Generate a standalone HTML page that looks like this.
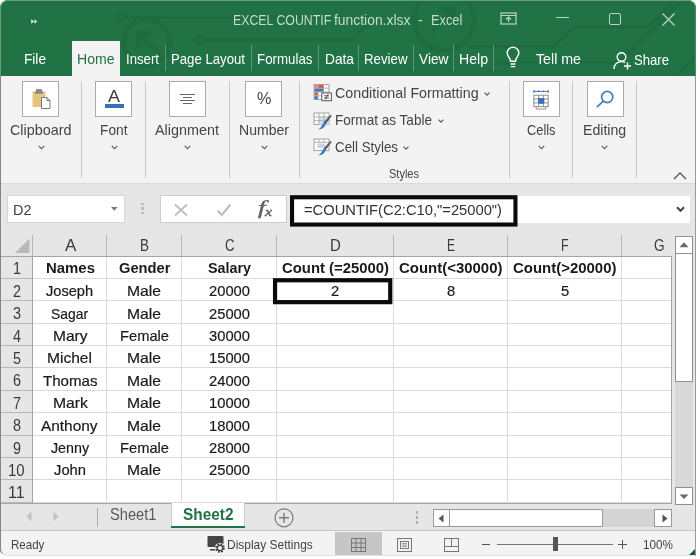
<!DOCTYPE html>
<html><head><meta charset="utf-8"><title>Excel</title>
<style>
html,body{margin:0;padding:0;background:#fff;}
body{width:700px;height:559px;position:relative;overflow:hidden;font-family:"Liberation Sans",sans-serif;}
#w{position:absolute;left:0;top:0;width:696px;height:556px;overflow:hidden;border-radius:8px 8px 0 7px;}
#w div,#w span,#w svg{position:absolute;box-sizing:border-box;}
.t{white-space:pre;transform-origin:0 50%;}
#tx{position:absolute;left:0;top:0;width:696px;height:556px;will-change:transform;}
#tx span{position:absolute;}
</style></head><body><div id="w">
<div style="left:0px;top:0px;width:696px;height:556px;background:#f3f3f3;"></div>
<div style="left:0px;top:0px;width:696px;height:76px;background:#217346;"></div>
<svg style="left:0;top:0" width="696" height="76" viewBox="0 0 696 76" fill="none" stroke="#1e6c40" stroke-width="3.5" stroke-linecap="round">
<circle cx="121" cy="17" r="4"/><path d="M126 17H330"/>
<circle cx="147" cy="42" r="23" stroke-width="5"/><path d="M138 33L158 53M138 46V33H151" stroke-width="5"/>
<circle cx="201" cy="40" r="4"/><path d="M206 40H352L366 26"/>
<circle cx="444" cy="20" r="30" stroke-width="5"/><path d="M432 31L453 10M440 10H453V23" stroke-width="5"/>
<path d="M470 47H553L575 27H648L673 2" stroke="#1e6c40" stroke-width="4"/>
<path d="M500 63H619L680 2" stroke="#1e6c40" stroke-width="4"/>
<path d="M674 78L697 55" stroke="#1e6c40" stroke-width="4"/>
</svg>
<svg style="left:30.800px;top:18.600px" width="7" height="5" viewBox="0 0 7 5"><path d="M0.2 0.2L3 2.5L0.2 4.800zM3.400 0.2L6.200 2.5L3.400 4.800z" fill="#e6f2ea"/></svg>
<svg style="left:500px;top:11px" width="18" height="16" viewBox="0 0 18 16" fill="none" stroke="#b9d6c5" stroke-width="1.2"><rect x="1" y="2" width="15" height="11"/><path d="M1 4.5H16M8.5 11V6.5M6 8.5L8.5 6L11 8.5"/></svg>
<div style="left:555.5px;top:17px;width:13px;height:1.3px;background:#b9d6c5;"></div>
<div style="left:609px;top:13px;width:12px;height:12px;border:1.3px solid #b9d6c5;border-radius:2px;"></div>
<svg style="left:662px;top:13px" width="13" height="13" viewBox="0 0 13 13" stroke="#b9d6c5" stroke-width="1.3"><path d="M0.5 0.5L12.5 12.5M12.5 0.5L0.5 12.5"/></svg>
<div style="left:72px;top:41px;width:47.5px;height:36px;background:#f3f3f3;"></div>
<div style="left:164.5px;top:45px;width:1px;height:26px;background:#5a9875;"></div>
<div style="left:250.5px;top:45px;width:1px;height:26px;background:#5a9875;"></div>
<div style="left:318.0px;top:45px;width:1px;height:26px;background:#5a9875;"></div>
<div style="left:358.0px;top:45px;width:1px;height:26px;background:#5a9875;"></div>
<div style="left:412.5px;top:45px;width:1px;height:26px;background:#5a9875;"></div>
<div style="left:452.5px;top:45px;width:1px;height:26px;background:#5a9875;"></div>
<div style="left:493.0px;top:45px;width:1px;height:26px;background:#5a9875;"></div>
<svg style="left:506px;top:46px" width="14" height="24" viewBox="0 0 14 24" fill="none" stroke="#fff" stroke-width="1.4"><path d="M7 1.2C3.6 1.2 1.2 3.8 1.2 7c0 2.4 1.6 3.9 2.6 5.6.5.9.6 1.7.6 2.6h5.2c0-.9.1-1.7.6-2.6 1-1.7 2.6-3.2 2.6-5.6 0-3.2-2.4-5.800-5.800-5.800z"/><path d="M4.500 18h5M4.800 20.600h4.400"/></svg>
<svg style="left:613px;top:50.5px" width="20" height="20" viewBox="0 0 20 20" fill="none" stroke="#fff" stroke-width="1.4"><circle cx="8.500" cy="6" r="4.300"/><path d="M1 18c0-4.500 3.200-7.400 7.500-7.400 1.500 0 2.800.3 3.900.9"/><path d="M14.500 11.500v7M11 15h7"/></svg>
<div style="left:22px;top:81px;width:37px;height:36px;background:#fff;border:1px solid #ababab;"></div>
<svg style="left:37.5px;top:145.200px" width="7" height="5" viewBox="0 0 7 5" fill="none" stroke="#5a5a5a" stroke-width="1.1"><path d="M0.700 0.800L3.500 3.600L6.300 0.800"/></svg>
<div style="left:95px;top:81px;width:37px;height:36px;background:#fff;border:1px solid #ababab;"></div>
<svg style="left:110.5px;top:145.200px" width="7" height="5" viewBox="0 0 7 5" fill="none" stroke="#5a5a5a" stroke-width="1.1"><path d="M0.700 0.800L3.500 3.600L6.300 0.800"/></svg>
<div style="left:169px;top:81px;width:37px;height:36px;background:#fff;border:1px solid #ababab;"></div>
<svg style="left:184.0px;top:145.200px" width="7" height="5" viewBox="0 0 7 5" fill="none" stroke="#5a5a5a" stroke-width="1.1"><path d="M0.700 0.800L3.500 3.600L6.300 0.800"/></svg>
<div style="left:245px;top:81px;width:37px;height:36px;background:#fff;border:1px solid #ababab;"></div>
<svg style="left:260.5px;top:145.200px" width="7" height="5" viewBox="0 0 7 5" fill="none" stroke="#5a5a5a" stroke-width="1.1"><path d="M0.700 0.800L3.500 3.600L6.300 0.800"/></svg>
<div style="left:523px;top:81px;width:37px;height:36px;background:#fff;border:1px solid #ababab;"></div>
<svg style="left:538.0px;top:145.200px" width="7" height="5" viewBox="0 0 7 5" fill="none" stroke="#5a5a5a" stroke-width="1.1"><path d="M0.700 0.800L3.500 3.600L6.300 0.800"/></svg>
<div style="left:586.5px;top:81px;width:37px;height:36px;background:#fff;border:1px solid #ababab;"></div>
<svg style="left:601.0px;top:145.200px" width="7" height="5" viewBox="0 0 7 5" fill="none" stroke="#5a5a5a" stroke-width="1.1"><path d="M0.700 0.800L3.500 3.600L6.300 0.800"/></svg>
<div style="left:81.0px;top:81px;width:1px;height:97px;background:#c8c8c8;"></div>
<div style="left:144.5px;top:81px;width:1px;height:97px;background:#c8c8c8;"></div>
<div style="left:229.0px;top:81px;width:1px;height:97px;background:#c8c8c8;"></div>
<div style="left:298.5px;top:81px;width:1px;height:97px;background:#c8c8c8;"></div>
<div style="left:509.0px;top:81px;width:1px;height:97px;background:#c8c8c8;"></div>
<div style="left:572.0px;top:81px;width:1px;height:97px;background:#c8c8c8;"></div>
<div style="left:635.5px;top:81px;width:1px;height:97px;background:#c8c8c8;"></div>
<svg style="left:31px;top:88px" width="22" height="22" viewBox="0 0 22 22">
<rect x="1.500" y="3.500" width="13" height="15.500" rx="1" fill="#e8c282"/>
<rect x="5" y="1" width="6" height="4" rx="1" fill="#8a8a8a"/><rect x="4" y="3.200" width="8" height="2.600" fill="#8a8a8a"/>
<path d="M10.500 9.500h5.500l3 3v8h-8.500z" fill="#fff" stroke="#777" stroke-width="1"/><path d="M16 9.500v3h3" fill="none" stroke="#777" stroke-width="1"/></svg>
<div style="left:104.5px;top:104px;width:19px;height:4px;background:#3b6db5;"></div>
<div style="left:180px;top:93.5px;width:15px;height:1px;background:#666;"></div>
<div style="left:183px;top:96.7px;width:9px;height:1px;background:#666;"></div>
<div style="left:180px;top:99.9px;width:15px;height:1px;background:#666;"></div>
<div style="left:183px;top:103.1px;width:9px;height:1px;background:#666;"></div>
<svg style="left:313px;top:83.5px" width="20" height="19" viewBox="0 0 20 19"><rect x="1" y="0.5" width="15" height="15" fill="#fff" stroke="#9a9a9a" stroke-width="0.9"/><path d="M1 4.2H16M1 8H16M1 11.800H16M5 0.5V15.5M10.500 0.5V15.5" stroke="#a8a8a8" stroke-width="0.9" fill="none"/><rect x="5.300" y="0.9" width="5" height="3" fill="#c8604a"/><rect x="1.400" y="0.9" width="3.400" height="3" fill="#d98a78"/><rect x="1.400" y="4.600" width="8.800" height="3" fill="#4a76b8"/><rect x="1.400" y="8.400" width="3.400" height="3" fill="#c8604a"/><rect x="1.400" y="12.200" width="3.400" height="3" fill="#4a76b8"/><rect x="8.800" y="9" width="9.600" height="7.700" fill="#fff" stroke="#555" stroke-width="1"/><path d="M11 11.800h5.200M11 14h5.200M15 10.300L12.300 15.500" stroke="#444" fill="none" stroke-width="0.9"/></svg>
<svg style="left:313px;top:112px" width="20" height="19" viewBox="0 0 20 19"><rect x="1" y="1" width="15" height="11.600" fill="#fff" stroke="#9a9a9a" stroke-width="0.9"/><rect x="6" y="5" width="10" height="7.600" fill="#d5e0ee"/><path d="M1 4.800H16M1 8.700H16M6 1V12.600M11 1V12.600" stroke="#a8a8a8" stroke-width="0.9" fill="none"/><path d="M18.800 3.800L12.600 12.200L10.600 10.500L17.400 3z" fill="#5a5a5a"/><path d="M5 17.200c2.200-0.300 3.500-2.600 5.200-6.200c0.300-0.600 2.800 1 2.400 1.800c-1.500 3.200-4 4.800-7.600 4.400z" fill="#3b78c6"/></svg>
<svg style="left:313px;top:138px" width="20" height="19" viewBox="0 0 20 19"><rect x="1" y="1" width="15" height="11.600" fill="#fff" stroke="#9a9a9a" stroke-width="0.9"/><rect x="4.500" y="5.500" width="8" height="4.500" fill="#c5d5ea"/><path d="M1 4.300H16M6 1V4.300M11 1V4.300" stroke="#a8a8a8" stroke-width="0.9" fill="none"/><path d="M18.800 3.800L12.600 12.200L10.600 10.500L17.400 3z" fill="#5a5a5a"/><path d="M5 17.200c2.200-0.300 3.500-2.600 5.200-6.200c0.300-0.600 2.800 1 2.400 1.800c-1.500 3.200-4 4.800-7.600 4.400z" fill="#3b78c6"/></svg>
<svg style="left:484px;top:91.5px" width="6" height="4" viewBox="0 0 6 4" fill="none" stroke="#5a5a5a" stroke-width="1.100"><path d="M0.500 0.600L3 3.200L5.500 0.600"/></svg>
<svg style="left:437.5px;top:118.5px" width="6" height="4" viewBox="0 0 6 4" fill="none" stroke="#5a5a5a" stroke-width="1.100"><path d="M0.500 0.600L3 3.200L5.500 0.600"/></svg>
<svg style="left:403px;top:145.5px" width="6" height="4" viewBox="0 0 6 4" fill="none" stroke="#5a5a5a" stroke-width="1.100"><path d="M0.500 0.600L3 3.200L5.500 0.600"/></svg>
<svg style="left:531px;top:88.500px" width="20" height="21" viewBox="0 0 20 22" fill="none">
<path d="M2.500 2.500H17.500M2.500 0.800V4.200M17.500 0.800V4.200M7.500 1.500V3.500M12.500 1.500V3.500" stroke="#3b6db5" stroke-width="1"/>
<rect x="2.500" y="6.500" width="15" height="12" fill="#fff" stroke="#8a8a8a"/><path d="M2.500 10.500H17.500M2.500 14.500H17.500M7.500 6.500V18.500M12.500 6.500V18.500" stroke="#8a8a8a"/>
<rect x="7" y="9.500" width="6.500" height="6" fill="#3b6db5"/><path d="M5 18.500v2.500h10v-2.500" stroke="#8a8a8a"/></svg>
<svg style="left:594px;top:88px" width="22" height="22" viewBox="0 0 22 22" fill="none" stroke="#4a7ebb" stroke-width="1.700"><circle cx="13.200" cy="9" r="5.600"/><path d="M9.300 13.200L3.300 18.600" stroke-linecap="round"/></svg>
<svg style="left:673px;top:171.500px" width="14" height="8" viewBox="0 0 14 8" fill="none" stroke="#555" stroke-width="1.300"><path d="M1 7L7 1L13 7"/></svg>
<div style="left:0px;top:183px;width:696px;height:50px;background:#e6e6e6;"></div>
<div style="left:0px;top:183px;width:696px;height:1px;background:#dadada;"></div>
<div style="left:6.5px;top:195px;width:118.5px;height:27.5px;background:#fff;border:1px solid #d6d6d6;"></div>
<svg style="left:110.500px;top:207.200px" width="7" height="4" viewBox="0 0 7 4"><path d="M0 0H6.600L3.300 3.700z" fill="#777"/></svg>
<div style="left:141.3px;top:202.5px;width:2.5px;height:2.5px;background:#bdbdbd;"></div>
<div style="left:141.3px;top:207px;width:2.5px;height:2.5px;background:#bdbdbd;"></div>
<div style="left:141.3px;top:211.5px;width:2.5px;height:2.5px;background:#bdbdbd;"></div>
<div style="left:159.5px;top:195px;width:127.5px;height:27.5px;background:#fff;border:1px solid #cdcdcd;"></div>
<svg style="left:174px;top:202.500px" width="14" height="14" viewBox="0 0 14 14" stroke="#bcbcbc" stroke-width="1.700"><path d="M1 1.500L13 12.500M13 1.500L1 12.500"/></svg>
<svg style="left:215.500px;top:202.500px" width="16" height="14" viewBox="0 0 16 14" fill="none" stroke="#bcbcbc" stroke-width="2.100"><path d="M1.500 7.500L5.800 12L14.500 1.500"/></svg>
<div style="left:290px;top:195.5px;width:400px;height:27px;background:#fff;"></div>
<svg style="left:288px;top:193px" width="232" height="36"><rect x="4.05" y="4.25" width="223.4" height="27.3" fill="#fff" stroke="#0a0a0a" stroke-width="4.1"/></svg>
<svg style="left:675.500px;top:205.500px" width="9" height="7" viewBox="0 0 9 7" fill="none" stroke="#444" stroke-width="2"><path d="M1 1.200L4.500 4.800L8 1.200"/></svg>
<div style="left:0px;top:233px;width:672px;height:271px;background:#fff;"></div>
<div style="left:0px;top:233px;width:672px;height:23.5px;background:#e6e6e6;"></div>
<div style="left:0px;top:233px;width:32.5px;height:271px;background:#e6e6e6;"></div>
<div style="left:32.5px;top:255.5px;width:639px;height:1px;background:#dbdbdb;"></div>
<div style="left:0px;top:255.5px;width:32.5px;height:1px;background:#a5a5a5;"></div>
<div style="left:32.5px;top:277.89px;width:639px;height:1px;background:#dbdbdb;"></div>
<div style="left:0px;top:277.89px;width:32.5px;height:1px;background:#b8b8b8;"></div>
<div style="left:32.5px;top:300.28px;width:639px;height:1px;background:#dbdbdb;"></div>
<div style="left:0px;top:300.28px;width:32.5px;height:1px;background:#b8b8b8;"></div>
<div style="left:32.5px;top:322.67px;width:639px;height:1px;background:#dbdbdb;"></div>
<div style="left:0px;top:322.67px;width:32.5px;height:1px;background:#b8b8b8;"></div>
<div style="left:32.5px;top:345.06px;width:639px;height:1px;background:#dbdbdb;"></div>
<div style="left:0px;top:345.06px;width:32.5px;height:1px;background:#b8b8b8;"></div>
<div style="left:32.5px;top:367.45px;width:639px;height:1px;background:#dbdbdb;"></div>
<div style="left:0px;top:367.45px;width:32.5px;height:1px;background:#b8b8b8;"></div>
<div style="left:32.5px;top:389.84000000000003px;width:639px;height:1px;background:#dbdbdb;"></div>
<div style="left:0px;top:389.84000000000003px;width:32.5px;height:1px;background:#b8b8b8;"></div>
<div style="left:32.5px;top:412.23px;width:639px;height:1px;background:#dbdbdb;"></div>
<div style="left:0px;top:412.23px;width:32.5px;height:1px;background:#b8b8b8;"></div>
<div style="left:32.5px;top:434.62px;width:639px;height:1px;background:#dbdbdb;"></div>
<div style="left:0px;top:434.62px;width:32.5px;height:1px;background:#b8b8b8;"></div>
<div style="left:32.5px;top:457.01px;width:639px;height:1px;background:#dbdbdb;"></div>
<div style="left:0px;top:457.01px;width:32.5px;height:1px;background:#b8b8b8;"></div>
<div style="left:32.5px;top:479.4px;width:639px;height:1px;background:#dbdbdb;"></div>
<div style="left:0px;top:479.4px;width:32.5px;height:1px;background:#b8b8b8;"></div>
<div style="left:32.5px;top:501.79px;width:639px;height:1px;background:#dbdbdb;"></div>
<div style="left:0px;top:501.79px;width:32.5px;height:1px;background:#b8b8b8;"></div>
<div style="left:32.0px;top:256px;width:1px;height:247px;background:#dbdbdb;"></div>
<div style="left:32.0px;top:235px;width:1px;height:21.5px;background:#b8b8b8;"></div>
<div style="left:106.0px;top:256px;width:1px;height:247px;background:#dbdbdb;"></div>
<div style="left:106.0px;top:235px;width:1px;height:21.5px;background:#b8b8b8;"></div>
<div style="left:181.0px;top:256px;width:1px;height:247px;background:#dbdbdb;"></div>
<div style="left:181.0px;top:235px;width:1px;height:21.5px;background:#b8b8b8;"></div>
<div style="left:275.5px;top:256px;width:1px;height:247px;background:#dbdbdb;"></div>
<div style="left:275.5px;top:235px;width:1px;height:21.5px;background:#b8b8b8;"></div>
<div style="left:393.0px;top:256px;width:1px;height:247px;background:#dbdbdb;"></div>
<div style="left:393.0px;top:235px;width:1px;height:21.5px;background:#b8b8b8;"></div>
<div style="left:507.0px;top:256px;width:1px;height:247px;background:#dbdbdb;"></div>
<div style="left:507.0px;top:235px;width:1px;height:21.5px;background:#b8b8b8;"></div>
<div style="left:621.0px;top:256px;width:1px;height:247px;background:#dbdbdb;"></div>
<div style="left:621.0px;top:235px;width:1px;height:21.5px;background:#b8b8b8;"></div>
<div style="left:32px;top:256px;width:640px;height:1px;background:#a5a5a5;"></div>
<div style="left:32px;top:256px;width:1px;height:247px;background:#a5a5a5;"></div>
<svg style="left:14px;top:238px" width="16" height="16" viewBox="0 0 16 16"><path d="M15.5 0.5V15H1z" fill="#b9b9b9"/></svg>
<svg style="left:270px;top:275px" width="125" height="33"><rect x="5.05" y="5.25" width="115.2" height="21.9" fill="none" stroke="#0a0a0a" stroke-width="4.2"/></svg>
<div style="left:672px;top:233px;width:24px;height:272px;background:#e6e6e6;"></div>
<div style="left:671px;top:256px;width:1px;height:248px;background:#a6a6a6;"></div>
<div style="left:675px;top:253px;width:17.5px;height:235px;background:#d9d9d9;"></div>
<div style="left:675px;top:252px;width:17.5px;height:130px;background:#fff;border:1px solid #8f8f8f;"></div>
<div style="left:675px;top:236px;width:17.5px;height:17.5px;background:#fff;border:1px solid #8f8f8f;"></div>
<svg style="left:679px;top:242px" width="10" height="6" viewBox="0 0 10 6"><path d="M5 0.3L9.500 5.200H0.500z" fill="#6a6a6a"/></svg>
<div style="left:675px;top:487px;width:17.5px;height:17.5px;background:#fff;border:1px solid #8f8f8f;"></div>
<svg style="left:679px;top:494.300px" width="10" height="6" viewBox="0 0 10 6"><path d="M0.500 0.500H9.500L5 5z" fill="#6a6a6a"/></svg>
<div style="left:0px;top:504px;width:672px;height:27px;background:#e6e6e6;"></div>
<div style="left:672px;top:505px;width:24px;height:26px;background:#e6e6e6;"></div>
<div style="left:0px;top:503px;width:672px;height:1px;background:#a6a6a6;"></div>
<svg style="left:26px;top:511px" width="6" height="11" viewBox="0 0 6 11"><path d="M5.500 0.500V10.500L0.500 5.500z" fill="#c2c2c2"/></svg>
<svg style="left:53px;top:511px" width="6" height="11" viewBox="0 0 6 11"><path d="M0.500 0.500V10.500L5.500 5.500z" fill="#c2c2c2"/></svg>
<div style="left:97px;top:507.5px;width:1px;height:19px;background:#ababab;"></div>
<div style="left:171px;top:503px;width:73.5px;height:24px;background:#fff;border:1px solid #c8c8c8;border-top:none;border-bottom:none;"></div>
<div style="left:171px;top:526px;width:73.5px;height:2px;background:#217346;"></div>
<svg style="left:273px;top:507px" width="22" height="22" viewBox="0 0 22 22" fill="none" stroke="#7a7a7a" stroke-width="1.200"><circle cx="11" cy="10.800" r="9"/><path d="M6 10.800H16M11 5.800V15.800" stroke-width="1.400"/></svg>
<div style="left:415.5px;top:511px;width:2.5px;height:2.5px;background:#b0b0b0;"></div>
<div style="left:415.5px;top:516px;width:2.5px;height:2.5px;background:#b0b0b0;"></div>
<div style="left:415.5px;top:521px;width:2.5px;height:2.5px;background:#b0b0b0;"></div>
<div style="left:432.5px;top:509px;width:17px;height:17.5px;background:#fff;border:1px solid #9a9a9a;"></div>
<svg style="left:438px;top:513.500px" width="6" height="9" viewBox="0 0 6 9"><path d="M5.500 0.500V8.500L0.500 4.500z" fill="#555"/></svg>
<div style="left:449px;top:509px;width:154px;height:17.5px;background:#fff;border:1px solid #9a9a9a;"></div>
<div style="left:603px;top:509px;width:52px;height:17.5px;background:#d4d4d4;"></div>
<div style="left:654px;top:509px;width:17.5px;height:17.5px;background:#fff;border:1px solid #9a9a9a;"></div>
<svg style="left:661.500px;top:513.500px" width="6" height="9" viewBox="0 0 6 9"><path d="M0.500 0.500V8.500L5.500 4.500z" fill="#555"/></svg>
<div style="left:0px;top:530.5px;width:696px;height:25.5px;background:#f3f3f3;"></div>
<div style="left:0px;top:530px;width:696px;height:1px;background:#c6c6c6;"></div>
<svg style="left:207px;top:535px" width="19" height="19" viewBox="0 0 19 19"><rect x="0.500" y="1" width="16" height="11" rx="1" fill="#444"/><rect x="3" y="14" width="7" height="1.500" fill="#444"/>
<circle cx="13" cy="13" r="5.300" fill="#f3f3f3"/><circle cx="13" cy="13" r="3.700" fill="none" stroke="#444" stroke-width="2.200" stroke-dasharray="1.700 1.200"/><circle cx="13" cy="13" r="2.700" fill="none" stroke="#444" stroke-width="1.300"/></svg>
<div style="left:335px;top:531.5px;width:46.5px;height:24px;background:#c6c6c6;"></div>
<svg style="left:351px;top:537.500px" width="15" height="15" viewBox="0 0 15 15" fill="none" stroke="#777" stroke-width="1"><rect x="0.500" y="0.500" width="14" height="13"/><path d="M0.500 5H14.500M0.500 9.500H14.500M5 0.500V13.500M10 0.500V13.500"/></svg>
<svg style="left:396.500px;top:537.500px" width="15" height="14" viewBox="0 0 15 14" fill="none" stroke="#777" stroke-width="1"><rect x="0.500" y="0.500" width="14" height="13"/><rect x="3.500" y="3.500" width="8" height="7"/><path d="M5 5.500H10M5 7H10M5 8.500H10" stroke-width="0.700"/></svg>
<svg style="left:444px;top:537.500px" width="15" height="14" viewBox="0 0 15 14" fill="none" stroke="#777" stroke-width="1"><rect x="0.500" y="0.500" width="14" height="13"/><path d="M0.500 8.500H14.500M7.500 0.500V8.500"/></svg>
<div style="left:482px;top:544px;width:8px;height:1.2px;background:#555;"></div>
<div style="left:496.5px;top:544px;width:116px;height:1px;background:#777;"></div>
<div style="left:553px;top:537px;width:5px;height:14px;background:#555;"></div>
<div style="left:618px;top:544px;width:9px;height:1.2px;background:#555;"></div>
<div style="left:622px;top:540px;width:1.2px;height:9px;background:#555;"></div>
<div style="left:0px;top:0px;width:696px;height:76px;border:1px solid #6a9c80;border-bottom:none;border-radius:8px 8px 0 0;border-right-color:#4d8a68;"></div>
<div style="left:0px;top:76px;width:1px;height:480px;background:#858585;"></div>
<div style="left:695px;top:76px;width:1px;height:480px;background:#9a9a9a;"></div>
<div style="left:0px;top:76px;width:696px;height:480px;border:1px solid #858585;border-top:none;border-radius:0 0 0 7px;border-right-color:#9a9a9a;border-bottom-color:#e2e2e2;"></div>
<svg style="left:689px;top:549px" width="6" height="6" viewBox="0 0 6 6"><path d="M6 0V6H0z" fill="#1d5e3a"/></svg>
</div>
<div id="tx">
<span class="t" style="left:232.6px;top:11.60px;font-size:14px;line-height:16.80px;color:#c3dccd;transform:scaleX(0.8807);">EXCEL COUNTIF</span>
<span class="t" style="left:334.2px;top:11.60px;font-size:14px;line-height:16.80px;color:#c3dccd;transform:scaleX(0.9916);">function.xlsx</span>
<span class="t" style="left:418.4px;top:11.60px;font-size:14px;line-height:16.80px;color:#c3dccd;transform:scaleX(1.0274);">-</span>
<span class="t" style="left:430.7px;top:11.60px;font-size:14px;line-height:16.80px;color:#c3dccd;transform:scaleX(0.9143);">Excel</span>
<span class="t" style="left:24px;top:50.50px;font-size:14.5px;line-height:17.40px;color:#ffffff;transform:scaleX(0.9412);">File</span>
<span class="t" style="left:77px;top:50.50px;font-size:14.5px;line-height:17.40px;color:#217346;transform:scaleX(0.9693);">Home</span>
<span class="t" style="left:126px;top:50.50px;font-size:14.5px;line-height:17.40px;color:#ffffff;transform:scaleX(0.9100);">Insert</span>
<span class="t" style="left:171px;top:50.50px;font-size:14.5px;line-height:17.40px;color:#ffffff;transform:scaleX(0.9087);">Page Layout</span>
<span class="t" style="left:257px;top:50.50px;font-size:14.5px;line-height:17.40px;color:#ffffff;transform:scaleX(0.9183);">Formulas</span>
<span class="t" style="left:324.5px;top:50.50px;font-size:14.5px;line-height:17.40px;color:#ffffff;transform:scaleX(0.9465);">Data</span>
<span class="t" style="left:364px;top:50.50px;font-size:14.5px;line-height:17.40px;color:#ffffff;transform:scaleX(0.9149);">Review</span>
<span class="t" style="left:418.5px;top:50.50px;font-size:14.5px;line-height:17.40px;color:#ffffff;transform:scaleX(0.9464);">View</span>
<span class="t" style="left:458.5px;top:50.50px;font-size:14.5px;line-height:17.40px;color:#ffffff;transform:scaleX(0.9722);">Help</span>
<span class="t" style="left:536px;top:50.50px;font-size:14.5px;line-height:17.40px;color:#ffffff;transform:scaleX(0.9796);">Tell me</span>
<span class="t" style="left:634px;top:52.30px;font-size:14.5px;line-height:17.40px;color:#ffffff;transform:scaleX(0.9043);">Share</span>
<span class="t" style="left:10.0px;top:122.30px;font-size:14.5px;line-height:17.40px;color:#444444;transform:scaleX(0.9907);">Clipboard</span>
<span class="t" style="left:99.5px;top:122.30px;font-size:14.5px;line-height:17.40px;color:#444444;transform:scaleX(0.9478);">Font</span>
<span class="t" style="left:155.0px;top:122.30px;font-size:14.5px;line-height:17.40px;color:#444444;transform:scaleX(0.9925);">Alignment</span>
<span class="t" style="left:239.0px;top:122.30px;font-size:14.5px;line-height:17.40px;color:#444444;transform:scaleX(0.9694);">Number</span>
<span class="t" style="left:527.0px;top:122.30px;font-size:14.5px;line-height:17.40px;color:#444444;transform:scaleX(0.8841);">Cells</span>
<span class="t" style="left:582.5px;top:122.30px;font-size:14.5px;line-height:17.40px;color:#444444;transform:scaleX(0.9742);">Editing</span>
<span class="t" style="left:108.3px;top:87.30px;font-size:16.5px;line-height:19.80px;color:#3a3a3a;transform:scaleX(1.0894);">A</span>
<span class="t" style="left:256.8px;top:88.92px;font-size:16.8px;line-height:20.16px;color:#444;transform:scaleX(0.9650);">%</span>
<span class="t" style="left:335px;top:85.30px;font-size:14.5px;line-height:17.40px;color:#444444;transform:scaleX(0.9843);">Conditional Formatting</span>
<span class="t" style="left:335px;top:112.30px;font-size:14.5px;line-height:17.40px;color:#444444;transform:scaleX(0.9354);">Format as Table</span>
<span class="t" style="left:335px;top:139.30px;font-size:14.5px;line-height:17.40px;color:#444444;transform:scaleX(0.9197);">Cell Styles</span>
<span class="t" style="left:389px;top:167.30px;font-size:12px;line-height:14.40px;color:#444444;transform:scaleX(0.9178);">Styles</span>
<span class="t" style="left:13px;top:202.00px;font-size:14.5px;line-height:17.40px;color:#444444;transform:scaleX(0.9975);">D2</span>
<span class="t" style="left:257.5px;top:197.10px;font-size:19px;line-height:22.80px;color:#5f5f5f;font-style:italic;font-family:'Liberation Serif',serif;-webkit-text-stroke:0.4px #5f5f5f;transform:scaleX(1.4201);">f</span>
<span class="t" style="left:264.5px;top:203.70px;font-size:13px;line-height:15.60px;color:#5f5f5f;font-style:italic;font-family:'Liberation Serif',serif;-webkit-text-stroke:0.4px #5f5f5f;transform:scaleX(1.2108);">x</span>
<span class="t" style="left:304px;top:201.80px;font-size:14.5px;line-height:17.40px;color:#333;transform:scaleX(1.0162);">=COUNTIF(C2:C10,&quot;=25000&quot;)</span>
<span class="t" style="left:64.5px;top:236.02px;font-size:16.3px;line-height:19.56px;color:#3a3a3a;transform:scaleX(1.0483);">A</span>
<span class="t" style="left:140.2px;top:236.02px;font-size:16.3px;line-height:19.56px;color:#3a3a3a;transform:scaleX(0.8276);">B</span>
<span class="t" style="left:224.5px;top:236.02px;font-size:16.3px;line-height:19.56px;color:#3a3a3a;transform:scaleX(0.8159);">C</span>
<span class="t" style="left:329.90000000000003px;top:236.02px;font-size:16.3px;line-height:19.56px;color:#3a3a3a;transform:scaleX(0.9179);">D</span>
<span class="t" style="left:447.0px;top:236.02px;font-size:16.3px;line-height:19.56px;color:#3a3a3a;transform:scaleX(0.7356);">E</span>
<span class="t" style="left:561.2px;top:236.02px;font-size:16.3px;line-height:19.56px;color:#3a3a3a;transform:scaleX(0.7636);">F</span>
<span class="t" style="left:653.7px;top:236.02px;font-size:16.3px;line-height:19.56px;color:#3a3a3a;transform:scaleX(0.8365);">G</span>
<span class="t" style="left:12.5px;top:259.39px;font-size:16px;line-height:19.20px;color:#3a3a3a;transform:scaleX(0.8982);">1</span>
<span class="t" style="left:12.5px;top:281.78px;font-size:16px;line-height:19.20px;color:#3a3a3a;transform:scaleX(0.8982);">2</span>
<span class="t" style="left:12.5px;top:304.18px;font-size:16px;line-height:19.20px;color:#3a3a3a;transform:scaleX(0.8982);">3</span>
<span class="t" style="left:12.5px;top:326.56px;font-size:16px;line-height:19.20px;color:#3a3a3a;transform:scaleX(0.8982);">4</span>
<span class="t" style="left:12.5px;top:348.95px;font-size:16px;line-height:19.20px;color:#3a3a3a;transform:scaleX(0.8982);">5</span>
<span class="t" style="left:12.5px;top:371.34px;font-size:16px;line-height:19.20px;color:#3a3a3a;transform:scaleX(0.8982);">6</span>
<span class="t" style="left:12.5px;top:393.73px;font-size:16px;line-height:19.20px;color:#3a3a3a;transform:scaleX(0.8982);">7</span>
<span class="t" style="left:12.5px;top:416.12px;font-size:16px;line-height:19.20px;color:#3a3a3a;transform:scaleX(0.8982);">8</span>
<span class="t" style="left:12.5px;top:438.51px;font-size:16px;line-height:19.20px;color:#3a3a3a;transform:scaleX(0.8982);">9</span>
<span class="t" style="left:8.2px;top:460.91px;font-size:16px;line-height:19.20px;color:#3a3a3a;transform:scaleX(0.9327);">10</span>
<span class="t" style="left:8.2px;top:483.30px;font-size:16px;line-height:19.20px;color:#3a3a3a;transform:scaleX(0.9994);">11</span>
<span class="t" style="left:45.5px;top:260.32px;font-size:14.3px;line-height:17.16px;color:#1a1a1a;font-weight:700;transform:scaleX(1.0446);">Names</span>
<span class="t" style="left:118.5px;top:260.32px;font-size:14.3px;line-height:17.16px;color:#1a1a1a;font-weight:700;transform:scaleX(1.0287);">Gender</span>
<span class="t" style="left:207.5px;top:260.32px;font-size:14.3px;line-height:17.16px;color:#1a1a1a;font-weight:700;transform:scaleX(1.0015);">Salary</span>
<span class="t" style="left:46px;top:282.29px;font-size:15px;line-height:18.00px;color:#1a1a1a;-webkit-text-stroke:0.2px #1a1a1a;transform:scaleX(0.9716);">Joseph</span>
<span class="t" style="left:127px;top:282.29px;font-size:15px;line-height:18.00px;color:#1a1a1a;-webkit-text-stroke:0.2px #1a1a1a;transform:scaleX(1.0457);">Male</span>
<span class="t" style="left:209px;top:282.29px;font-size:15px;line-height:18.00px;color:#1a1a1a;-webkit-text-stroke:0.2px #1a1a1a;transform:scaleX(0.9828);">20000</span>
<span class="t" style="left:51px;top:304.68px;font-size:15px;line-height:18.00px;color:#1a1a1a;-webkit-text-stroke:0.2px #1a1a1a;transform:scaleX(0.9243);">Sagar</span>
<span class="t" style="left:127px;top:304.68px;font-size:15px;line-height:18.00px;color:#1a1a1a;-webkit-text-stroke:0.2px #1a1a1a;transform:scaleX(1.0457);">Male</span>
<span class="t" style="left:209px;top:304.68px;font-size:15px;line-height:18.00px;color:#1a1a1a;-webkit-text-stroke:0.2px #1a1a1a;transform:scaleX(0.9828);">25000</span>
<span class="t" style="left:52.5px;top:327.07px;font-size:15px;line-height:18.00px;color:#1a1a1a;-webkit-text-stroke:0.2px #1a1a1a;transform:scaleX(1.0347);">Mary</span>
<span class="t" style="left:119.5px;top:327.07px;font-size:15px;line-height:18.00px;color:#1a1a1a;-webkit-text-stroke:0.2px #1a1a1a;transform:scaleX(0.9794);">Female</span>
<span class="t" style="left:209px;top:327.07px;font-size:15px;line-height:18.00px;color:#1a1a1a;-webkit-text-stroke:0.2px #1a1a1a;transform:scaleX(0.9828);">30000</span>
<span class="t" style="left:47px;top:349.46px;font-size:15px;line-height:18.00px;color:#1a1a1a;-webkit-text-stroke:0.2px #1a1a1a;transform:scaleX(1.0378);">Michel</span>
<span class="t" style="left:127px;top:349.46px;font-size:15px;line-height:18.00px;color:#1a1a1a;-webkit-text-stroke:0.2px #1a1a1a;transform:scaleX(1.0457);">Male</span>
<span class="t" style="left:209px;top:349.46px;font-size:15px;line-height:18.00px;color:#1a1a1a;-webkit-text-stroke:0.2px #1a1a1a;transform:scaleX(0.9828);">15000</span>
<span class="t" style="left:43px;top:371.85px;font-size:15px;line-height:18.00px;color:#1a1a1a;-webkit-text-stroke:0.2px #1a1a1a;transform:scaleX(1.0058);">Thomas</span>
<span class="t" style="left:127px;top:371.85px;font-size:15px;line-height:18.00px;color:#1a1a1a;-webkit-text-stroke:0.2px #1a1a1a;transform:scaleX(1.0457);">Male</span>
<span class="t" style="left:209px;top:371.85px;font-size:15px;line-height:18.00px;color:#1a1a1a;-webkit-text-stroke:0.2px #1a1a1a;transform:scaleX(0.9828);">24000</span>
<span class="t" style="left:52.5px;top:394.24px;font-size:15px;line-height:18.00px;color:#1a1a1a;-webkit-text-stroke:0.2px #1a1a1a;transform:scaleX(1.0497);">Mark</span>
<span class="t" style="left:127px;top:394.24px;font-size:15px;line-height:18.00px;color:#1a1a1a;-webkit-text-stroke:0.2px #1a1a1a;transform:scaleX(1.0457);">Male</span>
<span class="t" style="left:209px;top:394.24px;font-size:15px;line-height:18.00px;color:#1a1a1a;-webkit-text-stroke:0.2px #1a1a1a;transform:scaleX(0.9828);">10000</span>
<span class="t" style="left:41px;top:416.63px;font-size:15px;line-height:18.00px;color:#1a1a1a;-webkit-text-stroke:0.2px #1a1a1a;transform:scaleX(1.0264);">Anthony</span>
<span class="t" style="left:127px;top:416.63px;font-size:15px;line-height:18.00px;color:#1a1a1a;-webkit-text-stroke:0.2px #1a1a1a;transform:scaleX(1.0457);">Male</span>
<span class="t" style="left:209px;top:416.63px;font-size:15px;line-height:18.00px;color:#1a1a1a;-webkit-text-stroke:0.2px #1a1a1a;transform:scaleX(0.9828);">18000</span>
<span class="t" style="left:50.5px;top:439.02px;font-size:15px;line-height:18.00px;color:#1a1a1a;-webkit-text-stroke:0.2px #1a1a1a;transform:scaleX(0.9493);">Jenny</span>
<span class="t" style="left:119.5px;top:439.02px;font-size:15px;line-height:18.00px;color:#1a1a1a;-webkit-text-stroke:0.2px #1a1a1a;transform:scaleX(0.9794);">Female</span>
<span class="t" style="left:209px;top:439.02px;font-size:15px;line-height:18.00px;color:#1a1a1a;-webkit-text-stroke:0.2px #1a1a1a;transform:scaleX(0.9828);">28000</span>
<span class="t" style="left:54px;top:461.41px;font-size:15px;line-height:18.00px;color:#1a1a1a;-webkit-text-stroke:0.2px #1a1a1a;transform:scaleX(0.9837);">John</span>
<span class="t" style="left:127px;top:461.41px;font-size:15px;line-height:18.00px;color:#1a1a1a;-webkit-text-stroke:0.2px #1a1a1a;transform:scaleX(1.0457);">Male</span>
<span class="t" style="left:209px;top:461.41px;font-size:15px;line-height:18.00px;color:#1a1a1a;-webkit-text-stroke:0.2px #1a1a1a;transform:scaleX(0.9828);">25000</span>
<span class="t" style="left:281.5px;top:260.32px;font-size:14.3px;line-height:17.16px;color:#1a1a1a;font-weight:700;transform:scaleX(1.0399);">Count (=25000)</span>
<span class="t" style="left:399px;top:260.32px;font-size:14.3px;line-height:17.16px;color:#1a1a1a;font-weight:700;transform:scaleX(1.0463);">Count(&lt;30000)</span>
<span class="t" style="left:513px;top:260.32px;font-size:14.3px;line-height:17.16px;color:#1a1a1a;font-weight:700;transform:scaleX(1.0463);">Count(&gt;20000)</span>
<span class="t" style="left:330.6px;top:282.49px;font-size:15px;line-height:18.00px;color:#1a1a1a;-webkit-text-stroke:0.2px #1a1a1a;transform:scaleX(0.9828);">2</span>
<span class="t" style="left:446.5px;top:282.49px;font-size:15px;line-height:18.00px;color:#1a1a1a;-webkit-text-stroke:0.2px #1a1a1a;transform:scaleX(0.9828);">8</span>
<span class="t" style="left:560.7px;top:282.49px;font-size:15px;line-height:18.00px;color:#1a1a1a;-webkit-text-stroke:0.2px #1a1a1a;transform:scaleX(0.9828);">5</span>
<span class="t" style="left:110px;top:505.10px;font-size:16.5px;line-height:19.80px;color:#5a5a5a;transform:scaleX(0.8892);">Sheet1</span>
<span class="t" style="left:182.5px;top:505.10px;font-size:16.5px;line-height:19.80px;color:#217346;font-weight:700;transform:scaleX(0.9333);">Sheet2</span>
<span class="t" style="left:10.6px;top:537.02px;font-size:12.8px;line-height:15.36px;color:#444444;transform:scaleX(0.9027);">Ready</span>
<span class="t" style="left:226.7px;top:537.02px;font-size:12.8px;line-height:15.36px;color:#444444;transform:scaleX(0.9350);">Display Settings</span>
<span class="t" style="left:642.5px;top:537.02px;font-size:12.8px;line-height:15.36px;color:#444444;transform:scaleX(0.9165);">100%</span>
</div></body></html>
